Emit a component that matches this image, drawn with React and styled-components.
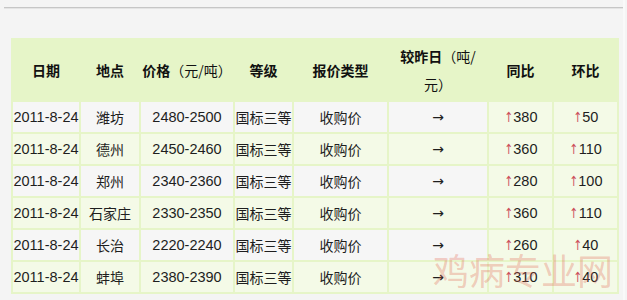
import React from "react";
import styled, { createGlobalStyle } from "styled-components";

const Global = createGlobalStyle`
  html, body { margin: 0; padding: 0; background: #f4f4f4; }
  body { font-family: "Liberation Sans", "Noto Sans CJK SC", sans-serif; }
`;

const Page = styled.div`
  position: relative;
  width: 621px;
  height: 300px;
  margin-left: 4px;
  padding-top: 7px;
  box-sizing: border-box;
  overflow: hidden;
  border-right: 2px solid #f9f9f9;
`;

const Rule = styled.div`
  height: 1px;
  background: #c6c6c6;
  border-bottom: 1px solid #e4e4e4;
`;

const Table = styled.table`
  margin: 29px 0 0 7px;
  width: 608px;
  table-layout: fixed;
  border-collapse: separate;
  border-spacing: 2px;
  background: #e6f5c8;
`;

const Head = styled.th`
  height: 60px;
  padding: 0;
  background: #e6f5c8;
  color: #111;
  font-family: "Noto Sans CJK SC", sans-serif;
  font-size: 14px;
  line-height: 28px;
  font-weight: 700;
  text-align: center;
  vertical-align: middle;
  width: ${(p) => p.$w}px;
`;

const Light = styled.span`
  font-weight: 400;
`;

const Cell = styled.td`
  height: 30px;
  box-sizing: border-box;
  padding: 0;
  background: ${(p) => (p.$tone === "green" ? "#f4fae7" : "#f6f6f6")};
  color: #1e1e1e;
  font-family: ${(p) =>
    p.$cjk ? '"Noto Sans CJK SC", sans-serif' : '"Liberation Sans", "Noto Sans CJK SC", sans-serif'};
  font-size: ${(p) => (p.$cjk ? 14 : 14.5)}px;
  line-height: 18px;
  text-align: center;
  vertical-align: middle;
  white-space: nowrap;
  overflow: hidden;
`;

const Up = styled.span`
  color: #cc4f5c;
  font-family: "DejaVu Sans", sans-serif;
  font-size: 14px;
  line-height: 18px;
  display: inline-block;
  transform: scaleX(0.75);
  margin: 0 -1px;
`;

const Arrow = styled.span`
  font-family: "DejaVu Sans", sans-serif;
  font-size: 14px;
  line-height: 18px;
`;

const Watermark = styled.div`
  position: absolute;
  left: 429px;
  top: 251px;
  font-family: "Noto Sans CJK SC", sans-serif;
  font-size: 36px;
  line-height: 36px;
  color: rgba(225, 95, 75, 0.3);
  white-space: nowrap;
  pointer-events: none;
`;

const widths = [66, 58, 92, 57, 93, 98, 63, 63];

const rows = [
  ["潍坊", "2480-2500", "380", "50"],
  ["德州", "2450-2460", "360", "110"],
  ["郑州", "2340-2360", "280", "100"],
  ["石家庄", "2330-2350", "360", "110"],
  ["长治", "2220-2240", "260", "40"],
  ["蚌埠", "2380-2390", "310", "40"],
];

export default function App() {
  return (
    <>
      <Global />
      <Page>
        <Rule />
        <Table>
          <thead>
            <tr>
              <Head $w={widths[0]}>日期</Head>
              <Head $w={widths[1]}>地点</Head>
              <Head $w={widths[2]}>
                价格<Light>（元/吨）</Light>
              </Head>
              <Head $w={widths[3]}>等级</Head>
              <Head $w={widths[4]}>报价类型</Head>
              <Head $w={widths[5]}>
                较昨日<Light>（吨/</Light>
                <br />
                <Light>元）</Light>
              </Head>
              <Head $w={widths[6]}>同比</Head>
              <Head $w={widths[7]}>环比</Head>
            </tr>
          </thead>
          <tbody>
            {rows.map(([place, price, yoy, mom], i) => {
              const tone = i % 2 === 1 ? "green" : "gray";
              return (
                <tr key={place}>
                  <Cell $tone={tone}>2011-8-24</Cell>
                  <Cell $tone={tone} $cjk>{place}</Cell>
                  <Cell $tone={tone}>{price}</Cell>
                  <Cell $tone={tone} $cjk>国标三等</Cell>
                  <Cell $tone={tone} $cjk>收购价</Cell>
                  <Cell $tone={tone}>
                    <Arrow>→</Arrow>
                  </Cell>
                  <Cell $tone="green">
                    <Up>↑</Up>
                    {yoy}
                  </Cell>
                  <Cell $tone="green">
                    <Up>↑</Up>
                    {mom}
                  </Cell>
                </tr>
              );
            })}
          </tbody>
        </Table>
        <Watermark>鸡病专业网</Watermark>
      </Page>
    </>
  );
}
